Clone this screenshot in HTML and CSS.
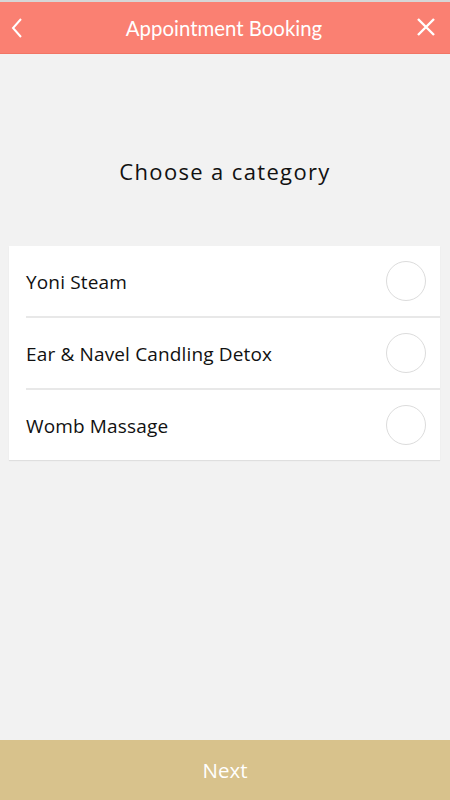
FILE: index.html
```html
<!DOCTYPE html>
<html>
<head>
<meta charset="utf-8">
<link rel="stylesheet" href="styles.css">
</head>
<body>
<div class="app">
  <header class="topbar">
    <span class="icon-btn back">
      <svg width="14" height="22" viewBox="0 0 14 22"><polyline points="11,2 3,11 11,20" fill="none" stroke="#fff" stroke-width="2"/></svg>
    </span>
    <h1 class="title">Appointment Booking</h1>
    <span class="icon-btn close">
      <svg width="20" height="20" viewBox="0 0 20 20"><path d="M2 2 L18 18 M18 2 L2 18" fill="none" stroke="#fff" stroke-width="2.4"/></svg>
    </span>
  </header>
  <main class="content">
    <h2 class="heading">Choose a category</h2>
    <ul class="list">
      <li class="row"><span class="label">Yoni Steam</span><span class="radio"></span></li>
      <li class="row"><span class="label">Ear &amp; Navel Candling Detox</span><span class="radio"></span></li>
      <li class="row"><span class="label">Womb Massage</span><span class="radio"></span></li>
    </ul>
  </main>
  <footer class="next">Next</footer>
</div>
</body>
</html>
```
FILE: styles.css
```css
* { box-sizing: border-box; }
html, body { margin: 0; padding: 0; }
body {
  background: #f2f2f2;
  font-family: "Open Sans", sans-serif;
  width: 450px;
  height: 800px;
  overflow: hidden;
}
.app {
  display: flex;
  flex-direction: column;
  height: 800px;
  border-top: 2px solid #d6d6d6;
}
.topbar {
  height: 52px;
  background: #fa8072;
  border-bottom: 1px solid #f27565;
  display: flex;
  align-items: center;
  justify-content: space-between;
  padding: 0 14px 0 10px;
}
.title {
  margin: 0;
  font-family: Lato, sans-serif;
  font-weight: 400;
  font-size: 20.4px;
  color: #fff;
  padding-top: 1px;
  padding-left: 8px;
}
.icon-btn { display: flex; align-items: center; }
.back { padding-top: 1px; }
.close { padding-bottom: 2px; }
.content {
  flex: 1;
  display: flex;
  flex-direction: column;
}
.heading {
  margin: 98px 0 0;
  height: 38px;
  line-height: 38px;
  text-align: center;
  font-weight: 400;
  font-size: 22px;
  letter-spacing: 1.35px;
  color: #111;
}
.list {
  list-style: none;
  margin: 56px 10px 0 9px;
  padding: 0;
  background: #fff;
  box-shadow: 0 1px 1px rgba(0,0,0,0.08);
}
.row {
  height: 72px;
  display: flex;
  align-items: center;
  justify-content: space-between;
  margin-left: 17px;
  padding-right: 14px;
  border-bottom: 2px solid #e8e8e8;
}
.row:last-child { border-bottom: none; height: 70px; }
.label {
  font-size: 19px;
  letter-spacing: 0.15px;
  color: #111;
  padding-top: 2px;
}
.radio {
  width: 40px;
  height: 40px;
  border-radius: 50%;
  border: 1px solid #dcdcdc;
}
.next {
  height: 60px;
  background: #d8c28c;
  color: #fff;
  font-size: 20.5px;
  display: flex;
  align-items: center;
  justify-content: center;
}
```
